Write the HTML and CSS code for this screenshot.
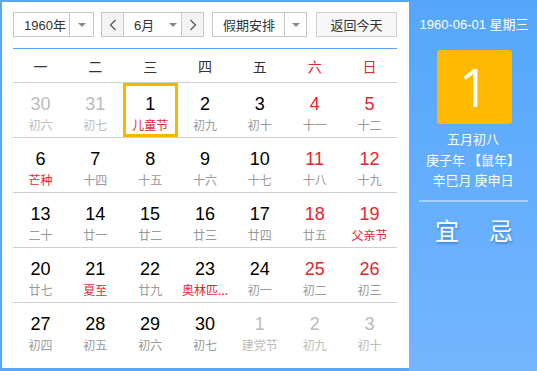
FILE: index.html
```html
<!DOCTYPE html>
<html lang="zh">
<head>
<meta charset="utf-8">
<link rel="stylesheet" href="styles.css">
</head>
<body>
<div class="widget">
  <div class="main">
    <div class="toolbar">
      <div class="select year">
        <span class="sel-text">1960年</span>
        <span class="sel-arrow"><i class="caret"></i></span>
      </div>
      <div class="select month">
        <span class="nav-btn"><svg width="8" height="12" viewBox="0 0 8 12"><path d="M6.5 1 L1.5 6 L6.5 11" fill="none" stroke="#555" stroke-width="1.2"/></svg></span>
        <span class="sel-text">6月</span>
        <span class="m-arrow"><i class="caret"></i></span>
        <span class="nav-btn next"><svg width="8" height="12" viewBox="0 0 8 12"><path d="M1.5 1 L6.5 6 L1.5 11" fill="none" stroke="#555" stroke-width="1.2"/></svg></span>
      </div>
      <div class="select holiday">
        <span class="sel-text">假期安排</span>
        <span class="sel-arrow"><i class="caret"></i></span>
      </div>
      <div class="today-btn">返回今天</div>
    </div>
    <div class="week">
      <span>一</span><span>二</span><span>三</span><span>四</span><span>五</span><span class="red">六</span><span class="red">日</span>
    </div>
    <div class="grid">
      <div class="cell other"><b>30</b><small>初六</small></div>
      <div class="cell other"><b>31</b><small>初七</small></div>
      <div class="cell sel"><b>1</b><small class="fest">儿童节</small></div>
      <div class="cell"><b>2</b><small>初九</small></div>
      <div class="cell"><b>3</b><small>初十</small></div>
      <div class="cell we"><b>4</b><small>十一</small></div>
      <div class="cell we"><b>5</b><small>十二</small></div>

      <div class="cell"><b>6</b><small class="fest">芒种</small></div>
      <div class="cell"><b>7</b><small>十四</small></div>
      <div class="cell"><b>8</b><small>十五</small></div>
      <div class="cell"><b>9</b><small>十六</small></div>
      <div class="cell"><b>10</b><small>十七</small></div>
      <div class="cell we"><b>11</b><small>十八</small></div>
      <div class="cell we"><b>12</b><small>十九</small></div>

      <div class="cell"><b>13</b><small>二十</small></div>
      <div class="cell"><b>14</b><small>廿一</small></div>
      <div class="cell"><b>15</b><small>廿二</small></div>
      <div class="cell"><b>16</b><small>廿三</small></div>
      <div class="cell"><b>17</b><small>廿四</small></div>
      <div class="cell we"><b>18</b><small>廿五</small></div>
      <div class="cell we"><b>19</b><small class="fest">父亲节</small></div>

      <div class="cell"><b>20</b><small>廿七</small></div>
      <div class="cell"><b>21</b><small class="fest">夏至</small></div>
      <div class="cell"><b>22</b><small>廿九</small></div>
      <div class="cell"><b>23</b><small class="fest">奥林匹...</small></div>
      <div class="cell"><b>24</b><small>初一</small></div>
      <div class="cell we"><b>25</b><small>初二</small></div>
      <div class="cell we"><b>26</b><small>初三</small></div>

      <div class="cell"><b>27</b><small>初四</small></div>
      <div class="cell"><b>28</b><small>初五</small></div>
      <div class="cell"><b>29</b><small>初六</small></div>
      <div class="cell"><b>30</b><small>初七</small></div>
      <div class="cell other"><b>1</b><small>建党节</small></div>
      <div class="cell other"><b>2</b><small>初九</small></div>
      <div class="cell other"><b>3</b><small>初十</small></div>
    </div>
  </div>
  <div class="side">
    <div class="side-date">1960-06-01 星期三</div>
    <div class="day-box">1</div>
    <div class="lunar">
      <div>五月初八</div>
      <div>庚子年 【鼠年】</div>
      <div>辛巳月 庚申日</div>
    </div>
    <div class="divider"></div>
    <div class="yiji"><span>宜</span><span>忌</span></div>
  </div>
</div>
</body>
</html>
```

FILE: styles.css
```css
* { box-sizing: border-box; }
html, body { margin: 0; padding: 0; }
body {
  font-family: "Liberation Sans", "Noto Sans CJK SC", sans-serif;
  background: #fff;
}
.widget {
  width: 537px;
  height: 371px;
  display: flex;
  background: #5aa7f8;
}
.main {
  width: 407px;
  margin: 2px 0 3px 2px;
  background: #fff;
  padding: 10px 12px 0 11px;
}
.toolbar {
  display: flex;
  height: 25px;
  font-size: 13px;
  color: #333;
}
.select {
  display: flex;
  align-items: stretch;
  border: 1px solid #c8c8c8;
  background: #fff;
}
.sel-text {
  display: flex;
  align-items: center;
}
.year { width: 81px; }
.year .sel-text { width: 55px; padding-left: 10px; }
.sel-arrow {
  flex: 1;
  border-left: 1px solid #c8c8c8;
  display: flex;
  align-items: center;
  justify-content: center;
}
.caret {
  width: 0; height: 0;
  border-left: 4px solid transparent;
  border-right: 4px solid transparent;
  border-top: 4px solid #888;
}
.month { width: 103px; margin-left: 7px; }
.nav-btn {
  width: 22px;
  background: #f4f4f4;
  border-right: 1px solid #c8c8c8;
  display: flex;
  align-items: center;
  justify-content: center;
}
.nav-btn.next { border-right: none; border-left: 1px solid #c8c8c8; }
.month .sel-text { padding-left: 10px; width: 36px; }
.m-arrow {
  flex: 1;
  display: flex;
  align-items: center;
  justify-content: center;
  padding-left: 4px;
}
.holiday { width: 95px; margin-left: 8px; }
.holiday .sel-text { width: 71px; padding-left: 10px; }
.today-btn {
  margin-left: 9px;
  width: 81px;
  border: 1px solid #cfcfcf;
  background: #f7f7f7;
  display: flex;
  align-items: center;
  justify-content: center;
}
.week {
  margin-top: 11px;
  border-top: 1px solid #55a3f7;
  display: grid;
  grid-template-columns: repeat(7, 1fr);
  height: 34px;
  align-items: center;
  font-family: "Noto Sans CJK SC", sans-serif;
  font-size: 14px;
  color: #333;
  text-align: center;
}
.week .red { color: #e4262e; }
.grid {
  display: grid;
  grid-template-columns: repeat(7, 1fr);
  grid-auto-rows: 55px;
}
.cell {
  border-top: 1px solid #cfcfcf;
  display: flex;
  flex-direction: column;
  align-items: center;
  padding-top: 10px;
}
.cell b {
  font-weight: normal;
  font-size: 18px;
  line-height: 22px;
  color: #000;
}
.cell small {
  font-family: "Noto Sans CJK SC", sans-serif;
  font-size: 12px;
  line-height: 16px;
  margin-top: 2px;
  color: #999;
  white-space: nowrap;
}
.cell.we b { color: #e4262e; }
.cell small.fest { color: #e4262e; }
.cell.other b, .cell.other small { color: #bbb; }
.cell.sel { box-shadow: inset 0 0 0 3px #fbb400; }
.side {
  width: 128px;
  background: linear-gradient(#55a6fb, #73b6fe);
  color: #fff;
  display: flex;
  flex-direction: column;
  align-items: center;
}
.side-date {
  margin-top: 17px;
  font-size: 13px;
  line-height: 16px;
  padding-left: 2px;
}
.day-box {
  margin-top: 17px;
  margin-left: 2px;
  width: 75px;
  height: 74px;
  background: #ffb900;
  border-radius: 3px;
  font-family: "Open Sans", sans-serif;
  font-weight: 400;
  font-size: 53px;
  line-height: 74px;
  text-align: center;
}
.lunar {
  margin-top: 5px;
  font-family: "Noto Sans CJK SC", sans-serif;
  font-size: 13px;
  line-height: 20.5px;
  text-align: center;
}
.divider {
  margin-top: 9px;
  width: 109px;
  height: 2px;
  background: #a8cffc;
}
.yiji {
  margin-top: 14px;
  display: flex;
  gap: 30px;
  font-family: "Noto Sans CJK SC", sans-serif;
  font-size: 24px;
  line-height: 28px;
  text-shadow: 1px 2px 2px rgba(0, 60, 140, 0.35);
  padding-left: 2px;
}
```
